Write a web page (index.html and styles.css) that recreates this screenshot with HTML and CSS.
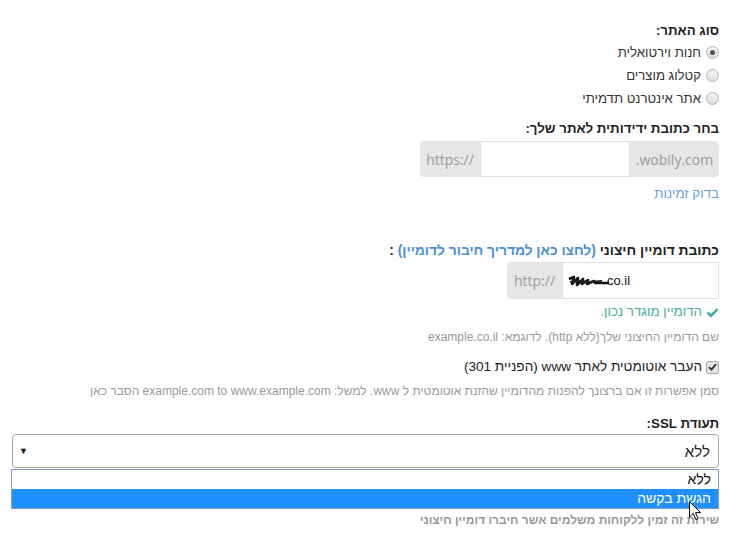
FILE: index.html
```html
<!DOCTYPE html>
<html lang="he" dir="rtl">
<head>
  <meta charset="UTF-8">
  <title>הגדרות דומיין</title>
  <link rel="stylesheet" href="styles.css">
</head>
<body>

<div class="form">
  <div class="field-label">סוג האתר:</div>
  <div class="radio-list">
    <label class="radio-row"><span class="radio checked"></span>חנות וירטואלית</label>
    <label class="radio-row"><span class="radio"></span>קטלוג מוצרים</label>
    <label class="radio-row"><span class="radio"></span>אתר אינטרנט תדמיתי</label>
  </div>

  <div class="field-label friendly-label">בחר כתובת ידידותית לאתר שלך:</div>
  <div class="input-group wobily-group">
    <span class="addon addon-suffix">.wobily.com</span>
    <span class="text-input"></span>
    <span class="addon addon-prefix">https://</span>
  </div>
  <a class="check-link" href="#">בדוק זמינות</a>

  <div class="field-label domain-label">כתובת דומיין חיצוני <a href="#">(לחצו כאן למדריך חיבור לדומיין)</a> :</div>
  <div class="input-group domain-group">
    <span class="text-input domain-input">
      <svg class="scribble" width="42" height="12" viewBox="0 0 42 12">
        <path d="M1 4 L6 2 L4 9 L10 3 L9 10 L15 4 L14 9 L20 5 L19 9 L26 6 L27 8 L41 8" fill="none" stroke="#111" stroke-width="2.6" stroke-linejoin="round"/>
        <path d="M2 7 L12 6 L22 7 L34 6" fill="none" stroke="#222" stroke-width="2.2"/>
      </svg>co.il
    </span>
    <span class="addon">http://</span>
  </div>
  <div class="success">
    <svg width="13" height="11" viewBox="0 0 13 11"><path d="M1.5 5.5 L5 9 L11.5 2" fill="none" stroke="#3fb1a2" stroke-width="2.6"/></svg>
    הדומיין מוגדר נכון.
  </div>
  <div class="help">שם הדומיין החיצוני שלך(ללא http). לדוגמא: example.co.il</div>

  <label class="check-row">
    <span class="checkbox">
      <svg width="9" height="8" viewBox="0 0 9 8"><path d="M1 4.2 L3.5 6.6 L8 1.2" fill="none" stroke="#333" stroke-width="1.8"/></svg>
    </span>
    העבר אוטומטית לאתר www (הפניית 301)
  </label>
  <div class="help">סמן אפשרות זו אם ברצונך להפנות מהדומיין שהזנת אוטומטית ל www. למשל: example.com to www.example.com <a href="#">הסבר כאן</a></div>

  <div class="field-label ssl-label">תעודת SSL:</div>
  <div class="select-wrap">
    <div class="select">
      <span>ללא</span>
      <span class="arrow">▼</span>
    </div>
    <ul class="options">
      <li>ללא</li>
      <li class="active">הגשת בקשה</li>
    </ul>
    <svg class="cursor" width="13" height="20" viewBox="0 0 13 20">
      <path d="M0.5 0.5 L0.5 16 L4.2 12.4 L6.8 18.6 L9 17.6 L6.5 11.6 L11.6 11.6 Z" fill="#fff" stroke="#000" stroke-width="1"/>
    </svg>
  </div>
  <div class="help note">שירות זה זמין ללקוחות משלמים אשר חיברו דומיין חיצוני</div>
</div>

</body>
</html>
```

FILE: styles.css
```css
body {
  margin: 0;
  padding: 21px 21px 0 12px;
  font-family: "Liberation Sans", Arial, sans-serif;
  font-size: 14px;
  color: #333;
  background: #fff;
}
.form {
  display: flex;
  flex-direction: column;
  align-items: flex-start;
}
.field-label {
  font-weight: bold;
  font-size: 13.3px;
  line-height: 20px;
  color: #222;
}
.field-label a {
  color: #4a8fd4;
  text-decoration: none;
}
.radio-list {
  display: flex;
  flex-direction: column;
}
.radio-row {
  display: flex;
  align-items: center;
  gap: 2px;
  height: 23px;
  line-height: 23px;
  font-size: 13.2px;
}
.radio {
  width: 11px;
  height: 11px;
  border-radius: 50%;
  border: 1px solid #b5b5b5;
  background: linear-gradient(#f4f4f4, #dedede);
  margin-left: 3px;
  position: relative;
}
.radio.checked::after {
  content: "";
  position: absolute;
  top: 3px;
  right: 3px;
  width: 5px;
  height: 5px;
  border-radius: 50%;
  background: #555;
}
.friendly-label {
  margin-top: 9px;
}
.input-group {
  display: flex;
  background: #e6e6e6;
  border-radius: 4px;
  margin-top: 2px;
}
.addon {
  display: flex;
  align-items: center;
  justify-content: center;
  direction: ltr;
  font-family: "Open Sans", Arial, sans-serif;
  font-size: 14px;
  color: #999;
}
.addon-suffix {
  width: 89px;
}
.addon-prefix {
  width: 60px;
}
.text-input {
  background: #fff;
  border: 1px solid #e0e0e0;
  box-sizing: border-box;
}
.wobily-group {
  height: 36px;
}
.wobily-group .text-input {
  width: 150px;
}
.check-link {
  margin-top: 7px;
  line-height: 20px;
  color: #6a9fd8;
  text-decoration: none;
  font-size: 13.3px;
}
.domain-label {
  margin-top: 37px;
  font-size: 13.8px;
}
.domain-group {
  height: 37px;
  margin-top: 1px;
}
.domain-group .addon {
  width: 55px;
}
.domain-input {
  width: 157px;
  direction: ltr;
  display: flex;
  align-items: center;
  padding-left: 5px;
  font-family: "Liberation Sans", Arial, sans-serif;
  font-size: 13px;
  color: #111;
}
.scribble {
  margin-right: -3px;
}
.success {
  display: flex;
  align-items: center;
  gap: 4px;
  margin-top: 3px;
  line-height: 20px;
  font-size: 13.3px;
  color: #45aea0;
}
.help {
  margin-top: 5px;
  line-height: 20px;
  font-size: 12px;
  color: #999;
}
.help a {
  color: #999;
  text-decoration: none;
}
.check-row {
  display: flex;
  align-items: center;
  gap: 4px;
  margin-top: 10px;
  line-height: 20px;
  font-size: 13.6px;
  color: #222;
}
.checkbox {
  width: 11px;
  height: 11px;
  border: 1px solid #aaa;
  border-radius: 2px;
  background: #e4e4e4;
  display: flex;
  align-items: center;
  justify-content: center;
}
.check-row + .help {
  margin-top: 4px;
}
.ssl-label {
  margin-top: 13px;
}
.select-wrap {
  position: relative;
  align-self: stretch;
}
.select {
  height: 34px;
  border: 1px solid #a9a9a9;
  border-radius: 4px;
  box-sizing: border-box;
  display: flex;
  align-items: center;
  justify-content: space-between;
  padding: 0 8px 0 6px;
  font-size: 15px;
  color: #222;
}
.arrow {
  font-size: 9px;
  color: #111;
}
.options {
  position: absolute;
  top: 35px;
  right: 0;
  left: -1px;
  margin: 0;
  padding: 0;
  list-style: none;
  border: 1px solid #7a9cd3;
  background: #fff;
  font-size: 14px;
  z-index: 2;
}
.options li {
  height: 19px;
  line-height: 19px;
  padding: 0 7px;
  color: #111;
}
.options li.active {
  background: #1e90ff;
  color: #fff;
}
.cursor {
  position: absolute;
  top: 67px;
  left: 677px;
  z-index: 3;
}
.note {
  margin-top: 42px;
  font-weight: bold;
}
```
